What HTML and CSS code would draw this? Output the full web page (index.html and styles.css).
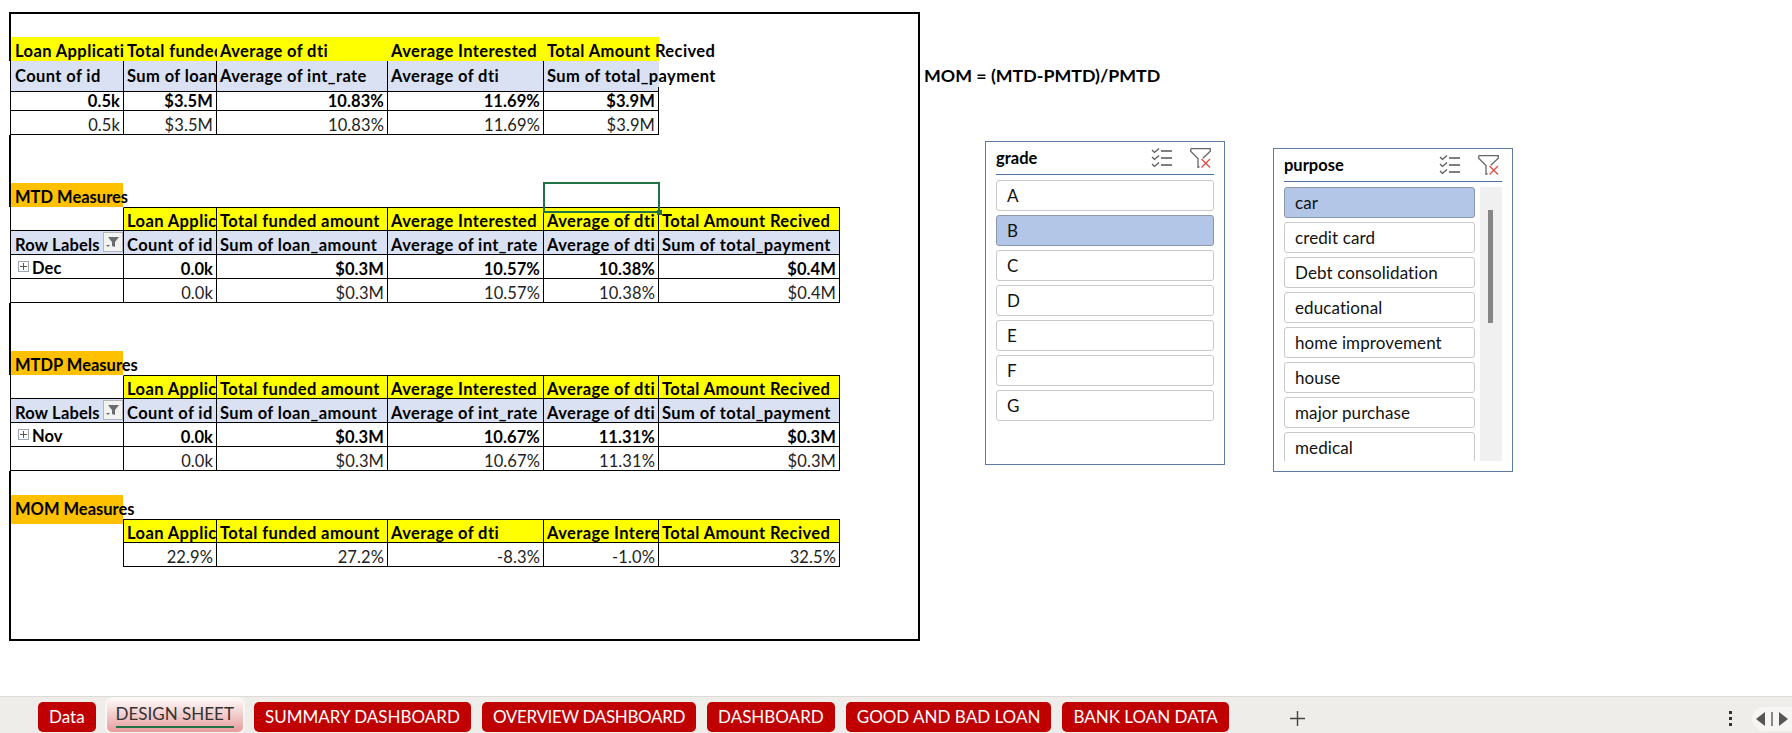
FILE: index.html
```html
<!DOCTYPE html>
<html>
<head>
<title>DESIGN SHEET</title>
<meta http-equiv="Content-Type" content="text/html;charset=utf-8" />
<link rel="stylesheet" href="styles.css">
</head>
<body>
<svg class="defs" width="0" height="0">
    <symbol id="funnel" viewBox="0 0 14 14">
        <path d="M2 2h11L9 7v5l-3-1V7z" fill="#6b6b6b"/>
        <path d="M0 10h4l-2 2z" fill="#6b6b6b"/>
    </symbol>
    <symbol id="multi" viewBox="0 0 21 20">
        <path d="M1 2l2.5 2.5L8 0.5M1 9l2.5 2.5L8 7.5M1 16l2.5 2.5L8 14.5" fill="none" stroke="#555" stroke-width="1.2"/>
        <path d="M10 3h11M10 10h11M10 17h11" fill="none" stroke="#555" stroke-width="1.5"/>
    </symbol>
    <symbol id="clear" viewBox="0 0 21 20">
        <path d="M.7 .7h19.6v2.6l-7.5 7M.7 .7v2.6L8 10.5v9l1.5-1" fill="none" stroke="#666" stroke-width="1.3"/>
        <path d="M11.5 11l8.5 8.5M20 11l-8.5 8.5" fill="none" stroke="#e0504a" stroke-width="1.4"/>
    </symbol>
</svg>

<div class="sheet">
    <div class="frame">
        <section class="block first">
            <div class="row head-yellow cols5 flat">
                <div class="cell">Loan Application</div>
                <div class="cell">Total funded amount</div>
                <div class="cell">Average of dti</div>
                <div class="cell">Average Interested</div>
                <div class="cell spill">Total Amount Recived</div>
            </div>
            <div class="row labels tall cols5 edge">
                <div class="cell">Count of id</div>
                <div class="cell">Sum of loan_amount</div>
                <div class="cell">Average of int_rate</div>
                <div class="cell">Average of dti</div>
                <div class="cell spill open">Sum of total_payment</div>
            </div>
            <div class="row data bold cols5 edge">
                <div class="cell num">0.5k</div>
                <div class="cell num">$3.5M</div>
                <div class="cell num">10.83%</div>
                <div class="cell num">11.69%</div>
                <div class="cell num">$3.9M</div>
            </div>
            <div class="row data cols5 edge">
                <div class="cell num">0.5k</div>
                <div class="cell num">$3.5M</div>
                <div class="cell num">10.83%</div>
                <div class="cell num">11.69%</div>
                <div class="cell num">$3.9M</div>
            </div>
        </section>

        <section class="block gap48">
            <div class="row title cols6">
                <div class="cell orange spill">MTD Measures</div>
                <div class="cell"></div>
                <div class="cell"></div>
                <div class="cell"></div>
                <div class="cell selected"></div>
                <div class="cell"></div>
            </div>
            <div class="row head-yellow boxed topline cols6 edge">
                <div class="cell blank"></div>
                <div class="cell">Loan Application</div>
                <div class="cell">Total funded amount</div>
                <div class="cell">Average Interested</div>
                <div class="cell">Average of dti</div>
                <div class="cell">Total Amount Recived</div>
            </div>
            <div class="row labels cols6 edge">
                <div class="cell rowlabel">Row Labels <span class="filterbtn"><svg width="14" height="14"><use href="#funnel"/></svg></span></div>
                <div class="cell">Count of id</div>
                <div class="cell">Sum of loan_amount</div>
                <div class="cell">Average of int_rate</div>
                <div class="cell">Average of dti</div>
                <div class="cell">Sum of total_payment</div>
            </div>
            <div class="row data bold cols6 edge">
                <div class="cell month"><span class="plus"></span>Dec</div>
                <div class="cell num">0.0k</div>
                <div class="cell num">$0.3M</div>
                <div class="cell num">10.57%</div>
                <div class="cell num">10.38%</div>
                <div class="cell num">$0.4M</div>
            </div>
            <div class="row data cols6 edge">
                <div class="cell"></div>
                <div class="cell num">0.0k</div>
                <div class="cell num">$0.3M</div>
                <div class="cell num">10.57%</div>
                <div class="cell num">10.38%</div>
                <div class="cell num">$0.4M</div>
            </div>
        </section>

        <section class="block gap48">
            <div class="row title cols6">
                <div class="cell orange spill">MTDP Measures</div>
            </div>
            <div class="row head-yellow boxed topline cols6 edge">
                <div class="cell blank"></div>
                <div class="cell">Loan Application</div>
                <div class="cell">Total funded amount</div>
                <div class="cell">Average Interested</div>
                <div class="cell">Average of dti</div>
                <div class="cell">Total Amount Recived</div>
            </div>
            <div class="row labels cols6 edge">
                <div class="cell rowlabel">Row Labels <span class="filterbtn"><svg width="14" height="14"><use href="#funnel"/></svg></span></div>
                <div class="cell">Count of id</div>
                <div class="cell">Sum of loan_amount</div>
                <div class="cell">Average of int_rate</div>
                <div class="cell">Average of dti</div>
                <div class="cell">Sum of total_payment</div>
            </div>
            <div class="row data bold cols6 edge">
                <div class="cell month"><span class="plus"></span>Nov</div>
                <div class="cell num">0.0k</div>
                <div class="cell num">$0.3M</div>
                <div class="cell num">10.67%</div>
                <div class="cell num">11.31%</div>
                <div class="cell num">$0.3M</div>
            </div>
            <div class="row data cols6 edge">
                <div class="cell"></div>
                <div class="cell num">0.0k</div>
                <div class="cell num">$0.3M</div>
                <div class="cell num">10.67%</div>
                <div class="cell num">11.31%</div>
                <div class="cell num">$0.3M</div>
            </div>
        </section>

        <section class="block gap24">
            <div class="row title cols6">
                <div class="cell orange spill">MOM Measures</div>
            </div>
            <div class="row head-yellow boxed topline cols6">
                <div class="cell none"></div>
                <div class="cell leftline">Loan Application</div>
                <div class="cell">Total funded amount</div>
                <div class="cell">Average of dti</div>
                <div class="cell">Average Interested</div>
                <div class="cell">Total Amount Recived</div>
            </div>
            <div class="row data cols6">
                <div class="cell none"></div>
                <div class="cell num leftline">22.9%</div>
                <div class="cell num">27.2%</div>
                <div class="cell num">-8.3%</div>
                <div class="cell num">-1.0%</div>
                <div class="cell num">32.5%</div>
            </div>
        </section>
    </div>

    <div class="side">
        <p class="formula">MOM = (MTD-PMTD)/PMTD</p>
        <div class="slicers">
            <div class="slicer">
                <div class="slicer-head">
                    <span class="slicer-name">grade</span>
                    <svg width="21" height="20"><use href="#multi"/></svg>
                    <svg width="21" height="20"><use href="#clear"/></svg>
                </div>
                <div class="slicer-list">
                    <div class="items">
                        <div class="item">A</div>
                        <div class="item on">B</div>
                        <div class="item">C</div>
                        <div class="item">D</div>
                        <div class="item">E</div>
                        <div class="item">F</div>
                        <div class="item">G</div>
                    </div>
                </div>
            </div>
            <div class="slicer lower">
                <div class="slicer-head">
                    <span class="slicer-name">purpose</span>
                    <svg width="21" height="20"><use href="#multi"/></svg>
                    <svg width="21" height="20"><use href="#clear"/></svg>
                </div>
                <div class="slicer-list">
                    <div class="items">
                        <div class="item on">car</div>
                        <div class="item">credit card</div>
                        <div class="item">Debt consolidation</div>
                        <div class="item">educational</div>
                        <div class="item">home improvement</div>
                        <div class="item">house</div>
                        <div class="item">major purchase</div>
                        <div class="item">medical</div>
                    </div>
                    <div class="track"><div class="thumb"></div></div>
                </div>
            </div>
        </div>
    </div>
</div>

<div class="tabbar">
    <div class="tab">Data</div>
    <div class="tab active"><span>DESIGN SHEET</span></div>
    <div class="tab">SUMMARY DASHBOARD</div>
    <div class="tab tight">OVERVIEW DASHBOARD</div>
    <div class="tab">DASHBOARD</div>
    <div class="tab">GOOD AND BAD LOAN</div>
    <div class="tab">BANK LOAN DATA</div>
    <svg class="addtab" width="15" height="15" viewBox="0 0 15 15"><path d="M7.5 0v15M0 7.5h15" stroke="#444" stroke-width="1.4"/></svg>
    <div class="dots"><i></i><i></i><i></i></div>
    <div class="scroller">
        <svg width="32" height="14" viewBox="0 0 32 14">
            <path d="M0 7l9-7v14z" fill="#555"/>
            <path d="M15 0h2v14h-2z" fill="#888"/>
            <path d="M32 7l-9-7v14z" fill="#555"/>
        </svg>
    </div>
</div>
</body>
</html>
```

FILE: styles.css
```css
html, body {
    margin: 0;
    height: 100%;
}
body {
    display: flex;
    flex-direction: column;
    height: 733px;
    overflow: hidden;
    background: white;
    color: black;
    font-family: "Lato", "Liberation Sans", sans-serif;
}
.defs {
    position: absolute;
}

/* sheet area */
.sheet {
    flex: 1;
    display: flex;
    align-items: flex-start;
    padding: 12px 0 0 9px;
}
.frame {
    box-sizing: border-box;
    width: 911px;
    height: 629px;
    border: 2px solid black;
    padding-top: 23px;
    flex: none;
}
.gap48 {
    margin-top: 48px;
}
.gap24 {
    margin-top: 24px;
}

.row {
    display: grid;
    height: 24px;
    box-sizing: border-box;
    font-size: 16.5px;
    letter-spacing: .1px;
    line-height: 28px;
}
.cols5 {
    grid-template-columns: 113px 93px 171px 156px 115px;
    width: 648px;
}
.cols6 {
    grid-template-columns: 113px 93px 171px 156px 115px 181px;
    width: 829px;
}
.edge {
    margin-left: -1px;
    border-left: 1px solid black;
    box-shadow: -1px 0 0 white;
}
.cell {
    box-sizing: border-box;
    min-width: 0;
    padding: 0 3px;
    overflow: hidden;
    white-space: nowrap;
    border-right: 1px solid black;
    border-bottom: 1px solid black;
}
.cell:first-child {
    padding-left: 4px;
}
.spill {
    overflow: visible;
}
.open {
    border-right: 0;
}

.title {
    font-weight: bold;
    letter-spacing: 0;
}
.title .cell {
    border: 0;
    line-height: 29px;
}
.orange {
    width: 112px;
    background: #ffc000;
}

.head-yellow {
    font-weight: bold;
    letter-spacing: .4px;
}
.head-yellow .cell {
    background: #ffff00;
    line-height: 27px;
}
.flat .cell {
    border: 0;
    line-height: 29px;
}
.boxed .cell.blank {
    background: white;
}
.boxed .cell.none,
.data .cell.none {
    background: transparent;
    border-color: transparent;
}
.topline .cell {
    border-top: 1px solid black;
}
.topline .cell.none,
.topline .cell.blank {
    border-top-color: transparent;
}
.leftline {
    border-left: 1px solid black;
    margin-left: -1px;
}

.labels {
    font-weight: bold;
    letter-spacing: .4px;
    line-height: 29px;
}
.labels.tall {
    height: 26px;
    line-height: 30px;
}
.labels .cell {
    background: #d9e1f2;
}
.data {
    color: #222;
}
.data.bold {
    font-weight: bold;
    color: black;
}
.num {
    text-align: right;
}

.rowlabel {
    display: flex;
    justify-content: space-between;
    padding-right: 0;
    letter-spacing: .2px;
}
.filterbtn {
    box-sizing: border-box;
    display: flex;
    align-items: center;
    justify-content: center;
    width: 20px;
    height: 20px;
    margin-top: 1px;
    background: #f2f2f2;
    border: 1px solid #b5b5b5;
}
.month {
    display: flex;
    align-items: center;
    padding-top: 3px;
    line-height: 22px;
}
.cell.month {
    padding-left: 7px;
}
.plus {
    box-sizing: border-box;
    width: 11px;
    height: 11px;
    margin: -3px 3px 0 0;
    border: 1px solid #9aa5b5;
    background:
        linear-gradient(#555, #555) center / 7px 1px no-repeat,
        linear-gradient(#555, #555) center / 1px 7px no-repeat;
}

.selected {
    position: relative;
    z-index: 1;
    overflow: visible;
    outline: 2px solid #217346;
    outline-offset: -1px;
}
.selected::after {
    content: "";
    position: absolute;
    right: -3px;
    bottom: -3px;
    width: 5px;
    height: 5px;
    background: #217346;
}

/* right side */
.side {
    margin-left: 3px;
}
.formula {
    margin: 51px 0 0;
    padding-left: 1px;
    height: 24px;
    font-size: 17.8px;
    line-height: 24px;
    font-weight: bold;
    white-space: nowrap;
}
.slicers {
    display: flex;
    align-items: flex-start;
    gap: 48px;
    margin: 54px 0 0 62px;
}
.slicer {
    box-sizing: border-box;
    width: 240px;
    height: 324px;
    padding: 0 10px;
    background: white;
    border: 1px solid #5b7ba6;
}
.lower {
    margin-top: 7px;
}
.slicer-head {
    display: flex;
    align-items: center;
    gap: 18px;
    height: 32px;
    padding-right: 3px;
    border-bottom: 1px solid #4f74a3;
}
.slicer-name {
    flex: 1;
    font-size: 16.5px;
    font-weight: bold;
}
.slicer-list {
    display: flex;
    gap: 5px;
    height: 280px;
    margin-top: 5px;
    overflow: hidden;
}
.items {
    flex: 1;
    display: flex;
    flex-direction: column;
    gap: 4px;
    height: 274px;
    overflow: hidden;
}
.item {
    box-sizing: border-box;
    flex: none;
    height: 31px;
    padding-left: 10px;
    font-size: 17px;
    letter-spacing: .1px;
    line-height: 29px;
    color: #111;
    border: 1px solid #c9c9c9;
    border-radius: 3px;
}
.item.on {
    background: #b4c6e7;
    border-color: #8b98ab;
}
.track {
    flex: none;
    width: 22px;
    height: 274px;
    background: #f0f0f0;
}
.thumb {
    width: 5px;
    height: 113px;
    margin: 23px 0 0 8px;
    background: #868686;
}

/* sheet tabs */
.tabbar {
    flex: none;
    box-sizing: border-box;
    display: flex;
    align-items: flex-start;
    gap: 11px;
    height: 37px;
    padding: 5px 0 0 38px;
    background: #efedea;
    border-top: 1px solid #dddbd8;
}
.tab {
    box-sizing: border-box;
    height: 30px;
    padding: 0 11px;
    font-size: 17px;
    line-height: 30px;
    white-space: nowrap;
    color: white;
    background: #c00000;
    border-radius: 5px;
}
.tab.tight {
    letter-spacing: -.35px;
}
.tab.active {
    height: 33px;
    margin-top: -3px;
    padding: 0 9px;
    line-height: 29px;
    color: #333;
    background: linear-gradient(#fdf8f8, #e79c9c);
    box-shadow: 0 0 0 2px #f8f7f6;
}
.tab.active span {
    display: block;
    height: 27px;
    border-bottom: 2px solid #217346;
}
.addtab {
    margin: 9px 0 0 50px;
}
.dots {
    display: flex;
    flex-direction: column;
    gap: 3px;
    margin: 9px 0 0 auto;
}
.dots i {
    width: 3px;
    height: 3px;
    background: #333;
}
.scroller {
    display: flex;
    align-items: center;
    justify-content: center;
    width: 40px;
    height: 24px;
    margin: 5px 0 0 9px;
    background: #f6f5f3;
    border-radius: 12px 0 0 12px;
}
```
